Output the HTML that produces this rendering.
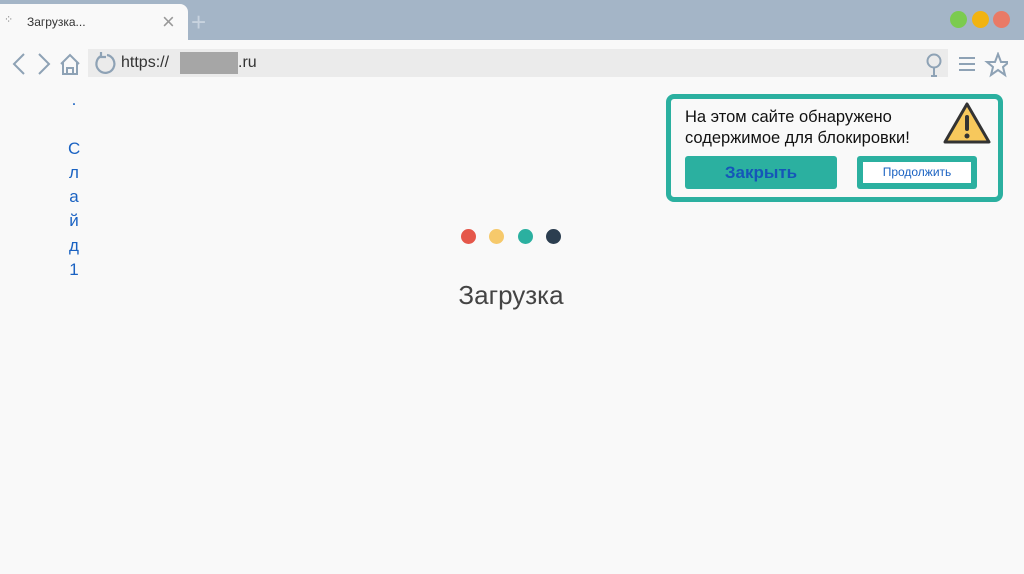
<!DOCTYPE html>
<html><head><meta charset="utf-8"><style>
*{margin:0;padding:0;box-sizing:border-box}
body{width:1024px;height:574px;background:#f9f9f9;font-family:"Liberation Sans",sans-serif;position:relative;overflow:hidden}
.a{position:absolute}
</style></head><body>
<div class="a" style="left:0;top:0;width:1024px;height:41px;background:#a4b5c7"></div>
<div class="a" style="left:0;top:4px;width:188px;height:40px;background:#f9f9f9;border-radius:0 8px 0 0"></div>
<div class="a" style="left:0;top:40px;width:1024px;height:42px;background:#f9f9f9"></div>
<div class="a" style="left:4px;top:13px;font-size:11px;color:#888">⁘</div>
<div class="a" style="left:27px;top:15px;font-size:12px;color:#333">Загрузка...</div>
<div class="a" style="left:162px;top:9px;font-size:22px;color:#999">×</div>
<div class="a" style="left:191px;top:7px;font-size:26px;color:#c8d3df;font-weight:300">+</div>
<div class="a" style="left:950px;top:11px;width:17px;height:17px;border-radius:50%;background:#7bcb4f"></div>
<div class="a" style="left:972px;top:11px;width:17px;height:17px;border-radius:50%;background:#f1b311"></div>
<div class="a" style="left:993px;top:11px;width:17px;height:17px;border-radius:50%;background:#e97a66"></div>
<svg class="a" style="left:10px;top:52px" width="72" height="24" fill="none" stroke="#8ea2b5" stroke-width="2"><path d="M14 2 L4 12 L14 22"/><path d="M29 2 L39 12 L29 22"/><path d="M51 12 L60 3 L69 12 M53 10 V22 H67 V10 M57 22 V16 H63 V22"/></svg>
<div class="a" style="left:88px;top:49px;width:860px;height:28px;background:#ebebeb"></div>
<svg class="a" style="left:93px;top:52px" width="24" height="24" fill="none" stroke="#8ea2b5" stroke-width="2.2"><path d="M8 4 A9 9 0 1 0 14 3"/><path d="M8 0 V5 H13"/></svg>
<div class="a" style="left:121px;top:54px;font-size:16px;color:#333">https://</div>
<div class="a" style="left:180px;top:52px;width:58px;height:22px;background:#a6a6a6"></div>
<div class="a" style="left:238px;top:54px;font-size:16px;color:#333">.ru</div>
<svg class="a" style="left:924px;top:52px" width="84" height="26" fill="none" stroke="#8ea2b5" stroke-width="2"><circle cx="10" cy="9" r="6.5"/><path d="M10 16 V24 M7 24 H13"/><path d="M35 6 H51 M35 12 H51 M35 18 H51"/><path d="M74 2 L77 10 L85 10 L79 15 L81 23 L74 18 L67 23 L69 15 L63 10 L71 10 Z"/></svg>
<div class="a" style="left:68px;top:88px;font-size:17px;color:#1a62c2;line-height:24.3px;text-align:center;width:12px">.<br><br>С<br>л<br>а<br>й<br>д<br>1</div>
<div class="a" style="left:461px;top:229px;width:15px;height:15px;border-radius:50%;background:#e5574a"></div>
<div class="a" style="left:489px;top:229px;width:15px;height:15px;border-radius:50%;background:#f6c96b"></div>
<div class="a" style="left:518px;top:229px;width:15px;height:15px;border-radius:50%;background:#2bb0a0"></div>
<div class="a" style="left:546px;top:229px;width:15px;height:15px;border-radius:50%;background:#2c3e50"></div>
<div class="a" style="left:411px;top:280px;width:200px;text-align:center;font-size:26px;color:#444">Загрузка</div>
<div class="a" style="left:666px;top:94px;width:337px;height:108px;border:5px solid #2bb0a0;border-radius:8px;background:#f9f9f9"></div>
<div class="a" style="left:685px;top:107px;font-size:16.5px;line-height:21px;color:#111">На этом сайте обнаружено<br>содержимое для блокировки!</div>
<svg class="a" style="left:942px;top:100px" width="50" height="46"><path d="M25 4 L47 42 H3 Z" fill="#f7c85c" stroke="#333" stroke-width="3" stroke-linejoin="round"/><rect x="23" y="15" width="4" height="16" rx="2" fill="#333"/><circle cx="25" cy="36" r="2.5" fill="#333"/></svg>
<div class="a" style="left:685px;top:156px;width:152px;height:33px;background:#2bb0a0;border-radius:3px;color:#1556b8;font-weight:bold;font-size:17px;text-align:center;line-height:33px">Закрыть</div>
<div class="a" style="left:857px;top:156px;width:120px;height:33px;background:#2bb0a0;border-radius:3px"></div>
<div class="a" style="left:863px;top:162px;width:108px;height:21px;background:#fff;color:#1a62c2;font-size:12px;text-align:center;line-height:21px">Продолжить</div>
</body></html>
